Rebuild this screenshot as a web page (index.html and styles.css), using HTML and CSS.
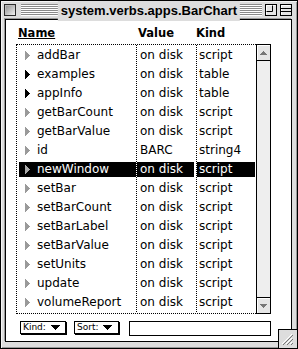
FILE: index.html
```html
<!DOCTYPE html>
<html lang="en">
<head>
    <meta charset="UTF-8">
    <title>system.verbs.apps.BarChart</title>
    <link rel="stylesheet" href="styles.css">
</head>
<body>
    <div class="window">
        <div class="titlebar">
            <span class="close-box"></span>
            <div class="stripes"></div>
            <svg class="wbox" width="12" height="12" viewBox="0 0 12 12">
                <rect x="0.5" y="0.5" width="11" height="11" fill="#e4e4e4" stroke="#000"/>
                <path d="M1.5 10.5V1.5H10.5" stroke="#fff" fill="none"/>
                <path d="M1.5 7.5H7.5V1.5" stroke="#000" fill="none"/>
            </svg>
            <svg class="wbox" width="12" height="12" viewBox="0 0 12 12">
                <rect x="0.5" y="0.5" width="11" height="11" fill="#e4e4e4" stroke="#000"/>
                <path d="M1.5 10.5V1.5H10.5" stroke="#fff" fill="none"/>
                <path d="M1 4.5H11M1 7.5H11" stroke="#000" fill="none"/>
            </svg>
            <div class="title">system.verbs.apps.BarChart</div>
        </div>

        <div class="panel">
            <div class="hdr">
                <span class="h-name">Name</span>
                <span class="h-val">Value</span>
                <span>Kind</span>
            </div>

            <div class="listbox">
                <div class="list" id="verbs-list"></div>
                <div class="scroll">
                    <div class="arrow up">
                        <svg width="7" height="4" viewBox="0 0 7 4"><path d="M3 0h1v1h1v1h1v1h1v1h-7v-1h1v-1h1v-1h1z"/></svg>
                    </div>
                    <div class="arrow down">
                        <svg width="7" height="4" viewBox="0 0 7 4"><path d="M0 0h7v1h-1v1h-1v1h-1v1h-1v-1h-1v-1h-1v-1h-1z"/></svg>
                    </div>
                </div>
            </div>

            <div class="controls">
                <div class="popup">Kind:
                    <svg width="9" height="5" viewBox="0 0 9 5"><path d="M0 0h9v1h-1v1h-1v1h-1v1h-1v1h-1v-1h-1v-1h-1v-1h-1v-1h-1z"/></svg>
                </div>
                <div class="popup sort">Sort:
                    <svg width="9" height="5" viewBox="0 0 9 5"><path d="M0 0h9v1h-1v1h-1v1h-1v1h-1v1h-1v-1h-1v-1h-1v-1h-1v-1h-1z"/></svg>
                </div>
                <input type="text" class="field">
            </div>
        </div>

        <div class="grow">
            <svg width="14" height="14" viewBox="0 0 14 14">
                <path d="M1 12L11 2M5 12L11 6M9 12L11 10" stroke="#fff" fill="none"/>
                <path d="M2 13L12 3M6 13L12 7M10 13L12 11" stroke="#777" fill="none"/>
            </svg>
        </div>
    </div>

    <script>
        // name, value, kind, flag ('open' = dark triangle, 'sel' = selected row)
        const verbs = [
            ['addBar', 'on disk', 'script'],
            ['examples', 'on disk', 'table', 'open'],
            ['appInfo', 'on disk', 'table', 'open'],
            ['getBarCount', 'on disk', 'script'],
            ['getBarValue', 'on disk', 'script'],
            ['id', 'BARC', 'string4'],
            ['newWindow', 'on disk', 'script', 'sel'],
            ['setBar', 'on disk', 'script'],
            ['setBarCount', 'on disk', 'script'],
            ['setBarLabel', 'on disk', 'script'],
            ['setBarValue', 'on disk', 'script'],
            ['setUnits', 'on disk', 'script'],
            ['update', 'on disk', 'script'],
            ['volumeReport', 'on disk', 'script']
        ];

        const list = document.getElementById('verbs-list');
        verbs.forEach(([name, value, kind, flag]) => {
            const row = document.createElement('div');
            row.className = 'row' + (flag === 'sel' ? ' selected' : '');
            const tri = flag === 'open' ? 'tri open' : 'tri';
            row.innerHTML =
                `<div class="c c-name"><svg class="${tri}" width="5" height="9" viewBox="0 0 5 9">` +
                `<path d="M0 0h1v1h1v1h1v1h1v1h1v1h-1v1h-1v1h-1v1h-1v1h-1z"/></svg><span>${name}</span></div>` +
                `<div class="c c-val">${value}</div>` +
                `<div class="c c-kind">${kind}</div>`;
            list.appendChild(row);
        });
    </script>
</body>
</html>
```

FILE: styles.css
```css
body {
    margin: 0;
    background: #fff;
}

.window {
    position: relative;
    width: 298px;
    height: 349px;
    box-sizing: border-box;
    border: 1px solid #000;
    background: #dddddd;
    box-shadow: inset 1px 1px 0 #f4f4f4, inset -1px -1px 0 #999;
    font-family: "DejaVu Sans", sans-serif;
    color: #000;
}

/* title bar */
.titlebar {
    position: relative;
    display: flex;
    align-items: center;
    height: 18px;
    padding: 0 5px 0 3px;
}

.close-box {
    width: 12px;
    height: 12px;
    box-sizing: border-box;
    border: 1px solid #2a2a2a;
    background: linear-gradient(135deg, #8c8c8c, #f2f2f2);
    box-shadow: inset 1px 1px 0 #bbb;
}

.stripes {
    flex: 1;
    height: 12px;
    margin-left: 5px;
    background: repeating-linear-gradient(to bottom, #8a8a8a 0 1px, #fff 1px 2px);
}

.wbox {
    display: block;
    margin-left: 3px;
}

.title {
    position: absolute;
    top: 0;
    left: 50%;
    transform: translateX(-50%);
    padding: 0 3px;
    background: #dddddd;
    font-family: "Liberation Sans", Arial, sans-serif;
    font-weight: bold;
    font-size: 13px;
    line-height: 20px;
    white-space: nowrap;
}

/* content area */
.panel {
    height: 323px;
    box-sizing: border-box;
    margin: 0 5px 0 4px;
    border: 1px solid #000;
    background: #fff;
    box-shadow: -1px -1px 0 #999;
}

.hdr {
    display: flex;
    padding: 6px 0 0 12px;
    height: 14px;
    margin-bottom: 4px;
    font-weight: bold;
    font-size: 11.5px;
    line-height: 14px;
}

.h-name {
    width: 120px;
    text-decoration: underline;
    text-underline-offset: 1px;
}

.h-val {
    width: 58px;
}

.listbox {
    display: flex;
    width: 255px;
    height: 270px;
    margin-left: 10px;
}

.list {
    flex: 1;
    box-sizing: border-box;
    padding-top: 1px;
    border: 1px dotted #000;
    border-right: none;
    background-image:
        repeating-linear-gradient(to bottom, #000 0 1px, transparent 1px 2px),
        repeating-linear-gradient(to bottom, #000 0 1px, transparent 1px 2px);
    background-size: 1px 100%, 1px 100%;
    background-position: 119px 0, 179px 0;
    background-repeat: no-repeat;
    font-size: 12px;
    line-height: 15px;
}

.row {
    display: grid;
    grid-template-columns: 120px 60px 59px;
    height: 19px;
}

.c {
    height: 15px;
    margin-top: 2px;
    white-space: nowrap;
}

.c-name {
    display: flex;
    align-items: center;
    margin: 2px 1px 0 2px;
    padding-left: 6px;
}

.c-name span {
    margin-left: 7px;
}

.c-val {
    margin-right: 3px;
    padding-left: 3px;
}

.c-kind {
    margin-right: 1px;
    padding-left: 2px;
}

.tri {
    fill: #9a9a9a;
    flex: none;
}

.tri.open {
    fill: #000;
}

.row.selected .c {
    background: #000;
    color: #fff;
}

.row.selected .tri {
    fill: #a8a8a8;
}

/* scroll bar, no thumb */
.scroll {
    width: 15px;
    box-sizing: border-box;
    border: 1px solid #000;
    background: #eeeeee;
    display: flex;
    flex-direction: column;
    justify-content: space-between;
}

.arrow {
    height: 15px;
    display: flex;
    align-items: center;
    justify-content: center;
    background: #e6e6e6;
    box-shadow: inset 1px 1px 0 #fff;
    fill: #777;
}

.arrow.up {
    border-bottom: 1px solid #000;
}

.arrow.down {
    border-top: 1px solid #000;
}

/* bottom controls */
.controls {
    display: flex;
    align-items: flex-start;
    margin: 7px 0 0 14px;
}

.popup {
    display: flex;
    align-items: center;
    justify-content: space-between;
    width: 46px;
    height: 13px;
    box-sizing: border-box;
    padding: 0 5px 0 2px;
    border: 1px solid #000;
    box-shadow: 1px 1px 0 #000;
    font-family: "DejaVu Sans", sans-serif;
    font-size: 9px;
    line-height: 11px;
}

.popup svg {
    display: block;
}

.popup.sort {
    width: 45px;
    margin-left: 8px;
    padding-right: 6px;
}

.field {
    width: 142px;
    height: 15px;
    box-sizing: border-box;
    margin: 0 0 0 10px;
    padding: 0;
    border: 1px solid #000;
    background: #fff;
    outline: none;
}

/* grow box in the lower right corner */
.grow {
    position: absolute;
    right: 0;
    bottom: 0;
    width: 19px;
    height: 19px;
    box-sizing: border-box;
    border-top: 1px solid #000;
    border-left: 1px solid #000;
    background: #dddddd;
    display: flex;
    align-items: center;
    justify-content: center;
}
```
